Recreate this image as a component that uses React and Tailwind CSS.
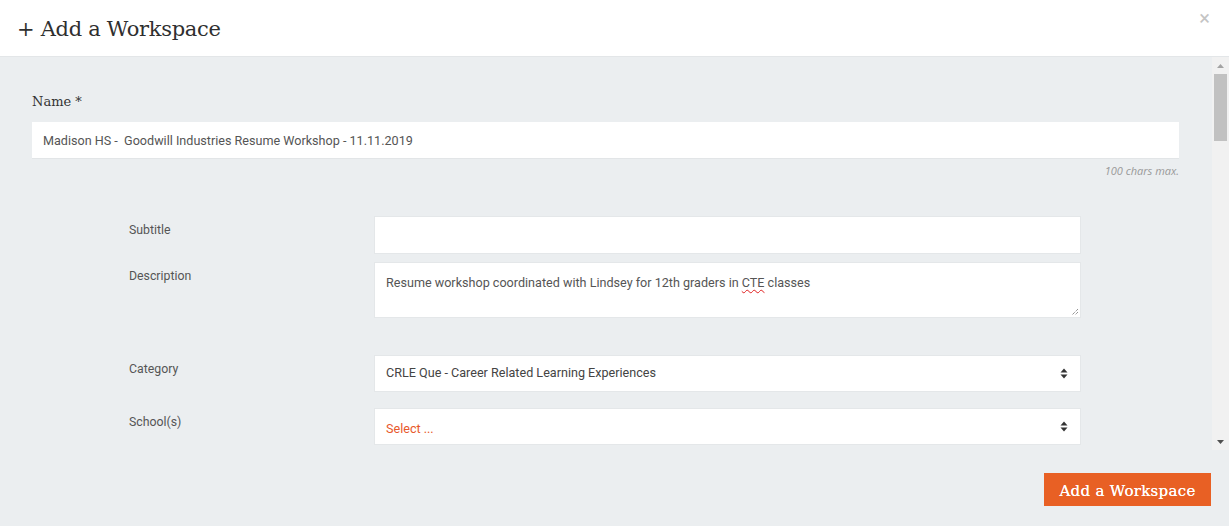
import { useState } from 'react';

const serif = { fontFamily: '"DejaVu Serif", "Liberation Serif", serif' };

function SelectArrows() {
  return (
    <svg width="8" height="11" viewBox="0 0 8 11" className="shrink-0">
      <path d="M0.5 4.5 L4 0.5 L7.5 4.5 Z" fill="#333" />
      <path d="M0.5 6.5 L4 10.5 L7.5 6.5 Z" fill="#333" />
    </svg>
  );
}

function Row({ label, children, className = '' }) {
  return (
    <div className={`flex ${className}`}>
      <div className="w-[245px] shrink-0 pt-[6px] text-[12.3px] leading-[17px] text-[#555]">{label}</div>
      <div className="w-[707px]">{children}</div>
    </div>
  );
}

function Scrollbar() {
  return (
    <div className="w-[17px] shrink-0 bg-[#f1f1f1] flex flex-col items-center">
      <div className="h-[17px] flex items-center justify-center">
        <svg width="7" height="4" viewBox="0 0 7 4"><path d="M0 4 L3.5 0 L7 4 Z" fill="#a3a3a3" /></svg>
      </div>
      <div className="w-[13px] h-[67px] bg-[#c1c1c1]" />
      <div className="flex-1" />
      <div className="h-[17px] flex items-center justify-center">
        <svg width="7" height="4" viewBox="0 0 7 4"><path d="M0 0 L3.5 4 L7 0 Z" fill="#505050" /></svg>
      </div>
    </div>
  );
}

export default function App() {
  const [name, setName] = useState('Madison HS -  Goodwill Industries Resume Workshop - 11.11.2019');
  const [subtitle, setSubtitle] = useState('');

  return (
    <div
      className="w-[1229px] h-[526px] bg-[#ebeef0] flex flex-col overflow-hidden"
      style={{ fontFamily: 'Roboto, "Noto Sans", sans-serif' }}
    >
      {/* Header */}
      <div className="h-[57px] shrink-0 bg-white border-b border-[#e3e6e8] flex items-center justify-between pl-[17px] pr-[19px]">
        <h1 className="text-[21px] text-[#2f2f2f] tracking-[-0.3px] mt-[4px]" style={serif}>+ Add a Workspace</h1>
        <button className="text-[#c4c4c4] text-[20px] leading-none -mt-[20px]">&times;</button>
      </div>

      {/* Scroll area */}
      <div className="h-[393px] shrink-0 flex">
        <div className="flex-1 pl-[32px] pr-[33px] pt-[36px] overflow-hidden">
          <div className="text-[13px] leading-[17px] text-[#333]" style={serif}>Name *</div>
          <input
            value={name}
            onChange={e => setName(e.target.value)}
            className="mt-[12px] w-full h-[37px] bg-white border-b border-[#e2e5e7] px-[11px] text-[12.6px] text-[#555] outline-none"
          />
          <div className="text-right text-[11px] italic text-[#999] mt-[5px] leading-[14px]" style={{ fontFamily: '"Open Sans", sans-serif' }}>
            100 chars max.
          </div>

          <div className="ml-[97px] mt-[38px] flex flex-col">
            <Row label="Subtitle">
              <input
                value={subtitle}
                onChange={e => setSubtitle(e.target.value)}
                className="w-full h-[38px] bg-white border border-[#e4e7e9] px-[11px] text-[12.6px] text-[#555] outline-none"
              />
            </Row>
            <Row label="Description" className="mt-[8px]">
              <div className="relative w-full h-[56px] bg-white border border-[#e4e7e9] px-[11px] pt-[11px] text-[12.6px] text-[#555]">
                Resume workshop coordinated with Lindsey for 12th graders in{' '}
                <span className="underline decoration-wavy decoration-[#e02020] decoration-[1px] underline-offset-2">CTE</span>{' '}
                classes
                <svg width="8" height="8" viewBox="0 0 8 8" className="absolute right-[1px] bottom-[1px]">
                  <path d="M7 1 L1 7 M7 4 L4 7" stroke="#666" strokeWidth="1" strokeDasharray="1 1" />
                </svg>
              </div>
            </Row>
            <Row label="Category" className="mt-[37px]">
              <div className="w-full h-[37px] bg-white border border-[#e4e7e9] pl-[11px] pr-[12px] flex items-center justify-between text-[12.6px] text-[#444]">
                <span>CRLE Que - Career Related Learning Experiences</span>
                <SelectArrows />
              </div>
            </Row>
            <Row label="School(s)" className="mt-[16px]">
              <div className="w-full h-[37px] bg-white border border-[#e4e7e9] pl-[11px] pr-[12px] flex items-center justify-between text-[12.6px] text-[#e8582b]">
                <span className="pt-[5px]">Select ...</span>
                <SelectArrows />
              </div>
            </Row>
          </div>
        </div>
        <Scrollbar />
      </div>

      {/* Footer */}
      <div className="flex justify-end pr-[18px] pt-[23px]">
        <button
          className="w-[167px] h-[33px] pt-[3px] bg-[#e86024] text-white text-[15px] tracking-[0.3px] [text-shadow:0_0_0.4px_#fff]"
          style={serif}
        >
          Add a Workspace
        </button>
      </div>
    </div>
  );
}
